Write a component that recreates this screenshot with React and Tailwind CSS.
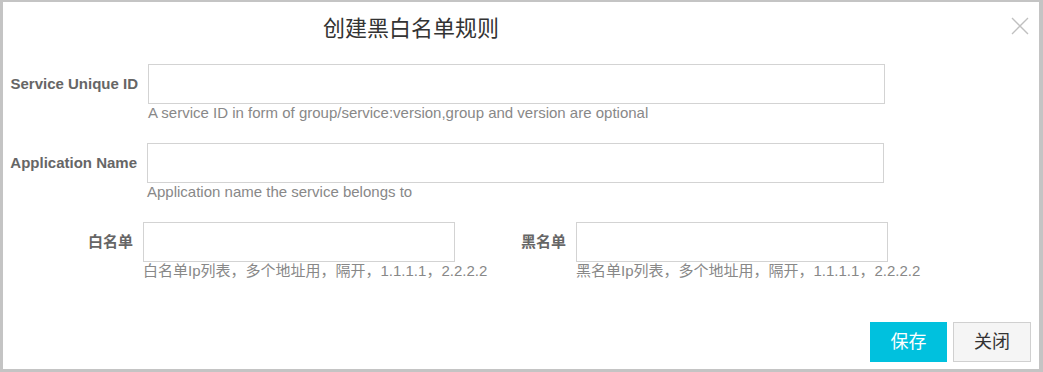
import React from "react";

const font = { fontFamily: '"Liberation Sans", Arial, "Noto Sans CJK SC", sans-serif' };

function Field({ labelWidth, inputWidth, label, help }) {
    return (
        <div className="flex items-start">
            <div
                className="h-[40px] flex items-center justify-end font-bold text-[15px] text-[#666] whitespace-nowrap"
                style={{ width: labelWidth }}
            >
                {label}
            </div>
            <div className="ml-[10px]" style={{ width: inputWidth }}>
                <input className="block w-full h-[40px] border border-[#d3d3d3] bg-white outline-none" />
                <div className="text-[15px] leading-[18px] text-[#888] whitespace-nowrap">{help}</div>
            </div>
        </div>
    );
}

export default function App() {
    return (
        <div
            className="w-[1043px] h-[372px] bg-white box-border border-solid border-[#c4c4c4] border-l-[3px] border-t-[2px] border-r-[4px] border-b-[3px] flex flex-col relative"
            style={font}
        >
            {/* Title */}
            <div className="h-[52px] flex items-center pl-[320px] text-[22px] text-[#333]">
                创建黑白名单规则
            </div>
            <button className="absolute top-[15px] right-[10px] w-[18px] h-[18px] text-[#c0c0c0]">
                <svg viewBox="0 0 18 18" width="18" height="18" fill="none" stroke="currentColor" strokeWidth="1.4">
                    <path d="M1 1 L17 17 M17 1 L1 17" />
                </svg>
            </button>

            {/* Form */}
            <div className="mt-[10px] flex flex-col gap-[21px]">
                <Field
                    labelWidth={135}
                    inputWidth={737}
                    label="Service Unique ID"
                    help="A service ID in form of group/service:version,group and version are optional"
                />
                <Field
                    labelWidth={134}
                    inputWidth={737}
                    label="Application Name"
                    help="Application name the service belongs to"
                />
                <div className="flex items-start">
                    <Field
                        labelWidth={130}
                        inputWidth={312}
                        label="白名单"
                        help="白名单Ip列表，多个地址用，隔开，1.1.1.1，2.2.2.2"
                    />
                    <Field
                        labelWidth={111}
                        inputWidth={312}
                        label="黑名单"
                        help="黑名单Ip列表，多个地址用，隔开，1.1.1.1，2.2.2.2"
                    />
                </div>
            </div>

            {/* Footer */}
            <div className="mt-[42px] pr-[8px] flex justify-end gap-[6px]">
                <button className="w-[77px] h-[40px] bg-[#00c1de] text-white text-[18px]">保存</button>
                <button className="w-[78px] h-[40px] bg-[#f5f5f5] border border-[#d0d0d0] text-[#333] text-[18px]">关闭</button>
            </div>
        </div>
    );
}
